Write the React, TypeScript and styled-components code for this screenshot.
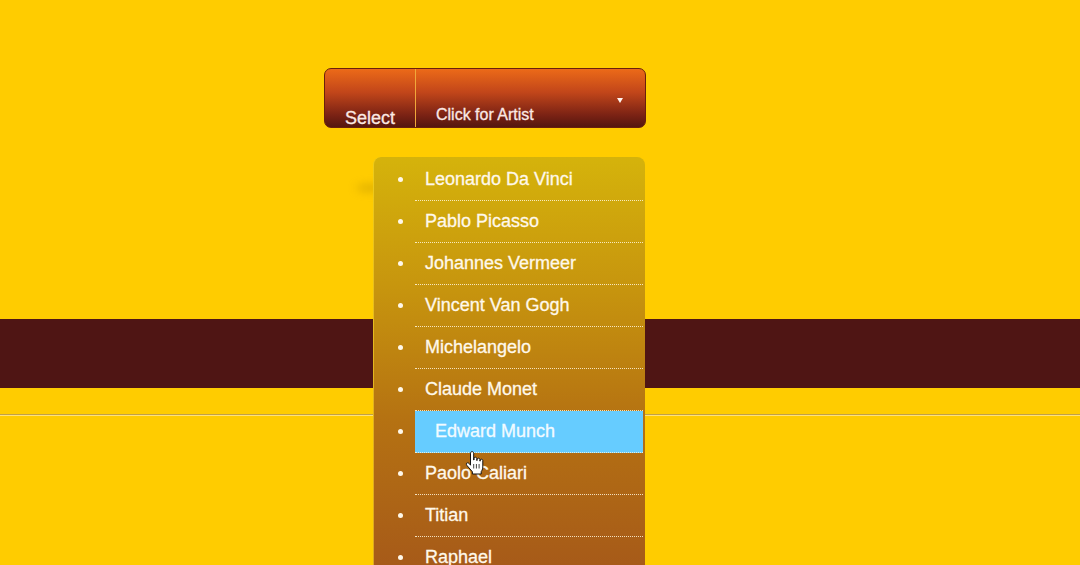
import React from "react";
import styled, { createGlobalStyle } from "styled-components";

const Global = createGlobalStyle`
  html, body {
    margin: 0;
    padding: 0;
    height: 565px;
    overflow: hidden;
    background: #ffcc00;
    font-family: "Liberation Sans", Arial, sans-serif;
  }
`;

const Page = styled.div`
  display: flex;
  flex-direction: column;
  padding-top: 68px;
`;

const SelectWrap = styled.div`
  position: relative;
  margin-left: 324px;
  width: 322px;
  z-index: 2;
`;

const SelectBox = styled.div`
  display: flex;
  box-sizing: border-box;
  width: 322px;
  height: 60px;
  border: 1px solid #6a200c;
  border-radius: 7px;
  background: linear-gradient(to bottom, #ec6a18 0%, #c2461a 40%, #7a2214 80%, #55170f 100%);
  color: #fbe9e4;
  overflow: hidden;
  -webkit-text-stroke: 0.3px currentColor;
`;

const Label = styled.div`
  display: flex;
  align-items: flex-end;
  box-sizing: border-box;
  width: 91px;
  padding: 0 0 0 20px;
  padding-bottom: 0;
  margin-bottom: -2px;
  border-right: 1px solid #f0a83a;
  font-size: 18px;
  line-height: 22px;
`;

const Value = styled.div`
  flex: 1;
  display: flex;
  justify-content: space-between;
  align-items: flex-end;
  padding: 0 22px 1px 20px;
  font-size: 16px;
  line-height: 22px;
`;

const Arrow = styled.span`
  align-self: flex-start;
  margin-top: 29px;
  width: 0;
  height: 0;
  border-left: 3.5px solid transparent;
  border-right: 3.5px solid transparent;
  border-top: 5px solid #fff4f0;
`;

const Smudge = styled.span`
  position: absolute;
  left: 32px;
  top: 116px;
  width: 30px;
  height: 8px;
  border-radius: 50%;
  background: rgba(170, 130, 0, 0.35);
  filter: blur(4px);
`;

const Panel = styled.ul`
  position: absolute;
  left: 49px;
  top: 89px;
  box-sizing: border-box;
  width: 272px;
  margin: 0;
  padding: 2px 2px 14px 41px;
  list-style: none;
  border-radius: 8px 8px 0 0;
  border-left: 1px solid rgba(255, 220, 40, 0.6);
  background: linear-gradient(to bottom, #d5b30b 0%, #c7950e 30%, #b57212 60%, #a4561a 100%);
`;

const Item = styled.li<{ $active?: boolean }>`
  position: relative;
  height: 41px;
  line-height: 41px;
  padding-left: ${(p) => (p.$active ? "20px" : "10px")};
  border-bottom: 1px dotted rgba(255, 246, 220, 0.85);
  background: ${(p) => (p.$active ? "#66ccff" : "transparent")};
  color: ${(p) => (p.$active ? "#f2fbff" : "#fff8ea")};
  font-size: 18px;
  white-space: nowrap;
  -webkit-text-stroke: 0.3px currentColor;

  &::before {
    content: "";
    position: absolute;
    left: -17px;
    top: 18px;
    width: 5px;
    height: 5px;
    border-radius: 50%;
    background: #fff8ea;
  }
`;

const Cursor = styled.svg`
  position: absolute;
  left: 141px;
  top: 383px;
  width: 19px;
  height: 25px;
  z-index: 3;
`;

const Band = styled.div`
  height: 69px;
  margin-top: 191px;
  background: #4f1514;
`;

const Rule = styled.div`
  height: 1px;
  margin-top: 26px;
  background: #bfa04a;
  border-bottom: 1px solid #ffe27a;
`;

const artists = [
  "Leonardo Da Vinci",
  "Pablo Picasso",
  "Johannes Vermeer",
  "Vincent Van Gogh",
  "Michelangelo",
  "Claude Monet",
  "Edward Munch",
  "Paolo Caliari",
  "Titian",
  "Raphael",
];

export default function App() {
  return (
    <>
      <Global />
      <Page>
        <SelectWrap>
          <SelectBox>
            <Label>Select</Label>
            <Value>
              <span>Click for Artist</span>
              <Arrow />
            </Value>
          </SelectBox>
          <Smudge />
          <Panel>
            {artists.map((a) => (
              <Item key={a} $active={a === "Edward Munch"}>
                {a}
              </Item>
            ))}
          </Panel>
          <Cursor viewBox="0 0 19 25">
            <path
              d="M5.5 2.2c0-.9.7-1.6 1.6-1.6s1.6.7 1.6 1.6V9h.3V7.6c0-.8.6-1.4 1.4-1.4s1.4.6 1.4 1.4V9.5h.3V8.6c0-.8.6-1.4 1.4-1.4s1.4.6 1.4 1.4v1.5h.3v-.6c0-.8.6-1.300 1.3-1.3s1.3.5 1.3 1.3V16c0 2.6-1.6 4.6-1.6 4.6V23H7.4v-2.2L2.4 15c-.7-.8-1.5-1.9-.7-2.8.9-.9 2.1-.2 2.7.6l1.1 1.4z"
              fill="#ffffff"
              stroke="#111111"
              strokeWidth="1"
              strokeLinejoin="round"
            />
            <path d="M8.7 13v4.5M11.4 13v4.5M14.1 13v4.5" stroke="#111" strokeWidth="0.8" />
          </Cursor>
        </SelectWrap>
        <Band />
        <Rule />
      </Page>
    </>
  );
}
